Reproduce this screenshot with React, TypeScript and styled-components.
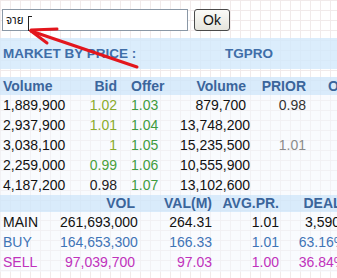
import React from "react";
import styled, { createGlobalStyle } from "styled-components";

const HEAD_BLUE = "#3b659b";
const BUY_BLUE = "#3f74b6";
const SELL_PINK = "#c032bc";

const GlobalStyle = createGlobalStyle`
  html, body {
    margin: 0;
    padding: 0;
  }
  body {
    font-family: "Liberation Sans", Arial, sans-serif;
    background-color: #ffffff;
    background-image:
      linear-gradient(to right, #f1eaea 1px, transparent 1px),
      linear-gradient(to bottom, #f1eaea 1px, transparent 1px);
    background-size: 10px 10px;
  }
`;

const Page = styled.div`
  position: relative;
  width: 337px;
  height: 278px;
  overflow: hidden;
`;

const SearchBar = styled.div`
  display: flex;
  gap: 6px;
  padding: 9px 0 0 2px;
`;

const InputWrap = styled.div`
  position: relative;
`;

const SearchInput = styled.input`
  box-sizing: border-box;
  width: 186px;
  height: 22px;
  margin: 0;
  padding: 0 3px;
  border: 1px solid #8a98a6;
  background: #fff;
  font-family: "Noto Sans Thai", Tahoma, "Liberation Sans", sans-serif;
  font-size: 11.5px;
  color: #111;
  outline: none;
`;

const Caret = styled.span`
  position: absolute;
  left: 26px;
  top: 7px;
  width: 3px;
  height: 13px;
  border-left: 1px solid #222;
  border-top: 1px solid #222;
  border-bottom: 1px solid #222;
`;

const OkButton = styled.button`
  box-sizing: border-box;
  width: 36px;
  height: 22px;
  margin: 0;
  padding: 0;
  border: 1px solid #4a4a4a;
  border-radius: 3px;
  background: linear-gradient(#fbfbf8, #e6e5dd);
  font-family: "Liberation Sans", Arial, sans-serif;
  font-size: 14px;
  color: #111;
`;

const TitleBand = styled.div`
  display: flex;
  align-items: center;
  height: 31px;
  margin-top: 7px;
  background: rgba(210, 232, 251, 0.8);
  font-size: 13.5px;
  font-weight: bold;
  color: #3f6ea8;
`;

const Title = styled.span`
  width: 222px;
  padding-left: 3px;
`;

const Table = styled.div<{ $gap: number }>`
  margin-top: ${(p) => p.$gap}px;
`;

const Row = styled.div<{ $cols: string; $head?: boolean; $h: number }>`
  display: grid;
  grid-template-columns: ${(p) => p.$cols};
  height: ${(p) => p.$h}px;
  line-height: ${(p) => p.$h}px;
  font-size: 14px;
  white-space: nowrap;
  background: ${(p) => (p.$head ? "rgba(208, 230, 250, 0.8)" : "rgba(243, 248, 253, 0.5)")};
  font-weight: ${(p) => (p.$head ? "bold" : "normal")};
  color: ${(p) => (p.$head ? HEAD_BLUE : "#111")};
`;

const Cell = styled.span<{ $align?: string; $pad?: number; $color?: string }>`
  text-align: ${(p) => p.$align || "right"};
  padding-left: ${(p) => p.$pad || 0}px;
  color: ${(p) => p.$color || "inherit"};
`;

const Arrow = styled.svg`
  position: absolute;
  left: 0;
  top: 0;
  pointer-events: none;
`;

const UPPER = "75px 42px 63px 66px 60px 1fr";
const LOWER = "60px 75px 77px 67px 87px";

const OLIVE = "#8aab2c";
const GREEN = "#3f9b3f";

const book = [
  { vol: "1,889,900", bid: "1.02", bidC: OLIVE, off: "1.03", vol2: "879,700", prior: "0.98", priorC: "#333" },
  { vol: "2,937,900", bid: "1.01", bidC: OLIVE, off: "1.04", vol2: "13,748,200", prior: "", priorC: "" },
  { vol: "3,038,100", bid: "1", bidC: OLIVE, off: "1.05", vol2: "15,235,500", prior: "1.01", priorC: "#8a8a8a" },
  { vol: "2,259,000", bid: "0.99", bidC: "#4a9f3c", off: "1.06", vol2: "10,555,900", prior: "", priorC: "" },
  { vol: "4,187,200", bid: "0.98", bidC: "#222", off: "1.07", vol2: "13,102,600", prior: "", priorC: "" },
];

const summary = [
  { name: "MAIN", color: "#111", vol: "261,693,000", val: "264.31", avg: "1.01", deal: "3,590" },
  { name: "BUY", color: BUY_BLUE, vol: "164,653,300", val: "166.33", avg: "1.01", deal: "63.16%" },
  { name: "SELL", color: SELL_PINK, vol: "97,039,700", val: "97.03", avg: "1.00", deal: "36.84%" },
];

export default function App() {
  return (
    <Page>
      <GlobalStyle />
      <SearchBar>
        <InputWrap>
          <SearchInput defaultValue="จาย" />
          <Caret />
        </InputWrap>
        <OkButton>Ok</OkButton>
      </SearchBar>

      <TitleBand>
        <Title>MARKET BY PRICE :</Title>
        <span>TGPRO</span>
      </TitleBand>

      <Table $gap={8}>
        <Row $cols={UPPER} $head $h={18}>
          <Cell $align="left" $pad={3}>Volume</Cell>
          <Cell>Bid</Cell>
          <Cell $align="left" $pad={14}>Offer</Cell>
          <Cell>Volume</Cell>
          <Cell>PRIOR</Cell>
          <Cell $align="left" $pad={22}>OPEN</Cell>
        </Row>
        {book.map((r) => (
          <Row $cols={UPPER} $h={20} key={r.vol}>
            <Cell $align="left" $pad={3}>{r.vol}</Cell>
            <Cell $color={r.bidC}>{r.bid}</Cell>
            <Cell $align="left" $pad={14} $color={GREEN}>{r.off}</Cell>
            <Cell>{r.vol2}</Cell>
            <Cell $color={r.priorC}>{r.prior}</Cell>
            <Cell />
          </Row>
        ))}
      </Table>

      <Table $gap={0}>
        <Row $cols={LOWER} $head $h={17}>
          <Cell />
          <Cell>VOL</Cell>
          <Cell>VAL(M)</Cell>
          <Cell>AVG.PR.</Cell>
          <Cell $align="center">DEAL</Cell>
        </Row>
        {summary.map((r) => (
          <Row $cols={LOWER} $h={20} key={r.name} style={{ color: r.color }}>
            <Cell $align="left" $pad={3}>{r.name}</Cell>
            <Cell>{r.vol}</Cell>
            <Cell>{r.val}</Cell>
            <Cell>{r.avg}</Cell>
            <Cell $align="center">{r.deal}</Cell>
          </Row>
        ))}
      </Table>

      <Arrow width="337" height="278" viewBox="0 0 337 278">
        <g stroke="#e3161d" strokeWidth="3" strokeLinecap="round" fill="none">
          <line x1="137" y1="67" x2="31" y2="31" />
          <line x1="31" y1="30" x2="57" y2="29" />
          <line x1="31" y1="31" x2="47" y2="43" />
        </g>
      </Arrow>
    </Page>
  );
}
